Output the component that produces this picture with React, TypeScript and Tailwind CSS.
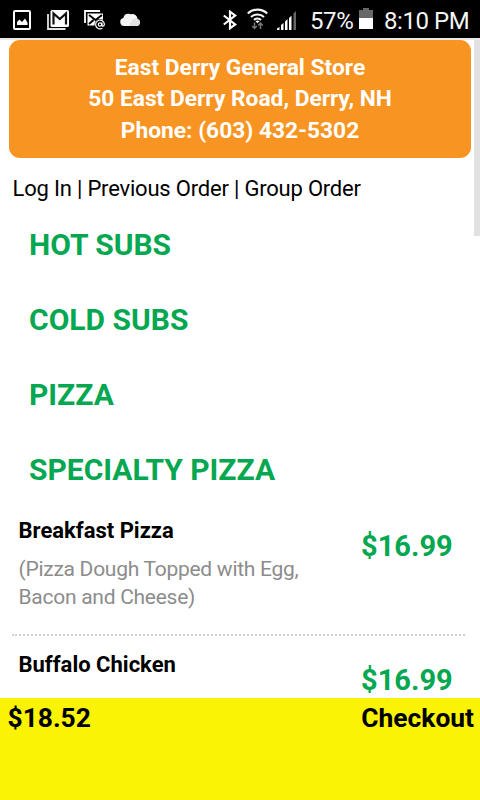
import React from "react";

const categories = ["HOT SUBS", "COLD SUBS", "PIZZA", "SPECIALTY PIZZA"];

const items = [
  {
    name: "Breakfast Pizza",
    description: "(Pizza Dough Topped with Egg, Bacon and Cheese)",
    price: "$16.99"
  },
  {
    name: "Buffalo Chicken",
    description: "",
    price: "$16.99"
  }
];

const PictureIcon = () => (
  <svg width="18" height="20" viewBox="0 0 18 20">
    <rect x="1" y="1" width="16" height="18" rx="1" fill="none" stroke="#fff" strokeWidth="2" />
    <path d="M4 15v-3l2.500-2.500L9 12l3-3.500 2.500 4V15z" fill="#fff" />
  </svg>
);

const GmailIcon = () => (
  <svg width="22" height="20" viewBox="0 0 22 20">
    <path d="M1 4v15h17.500" fill="none" stroke="#e4e4e4" strokeWidth="1.800" />
    <rect x="3.500" y="0" width="18.500" height="17" rx="1.500" fill="#fff" />
    <path d="M6.500 14.500V3.500L12.800 9l6.200-5.500v11" fill="none" stroke="#111" strokeWidth="2.200" />
  </svg>
);

const MailIcon = () => (
  <svg width="22" height="20" viewBox="0 0 22 20">
    <path d="M1 13V1h15" fill="none" stroke="#fff" strokeWidth="1.800" />
    <rect x="3.500" y="3.500" width="15.500" height="12" fill="#fff" />
    <path d="M5 5l6.500 5L18 5M5 14l4.500-4M13.500 10l3 3" fill="none" stroke="#000" strokeWidth="2" />
    <circle cx="16.200" cy="14.500" r="5.600" fill="#000" />
    <circle cx="16" cy="14.500" r="1.700" fill="none" stroke="#fff" strokeWidth="1.200" />
    <path d="M18 12.500v2.700c0 1.700 2.400 1.200 2.400-.9a4.400 4.400 0 1 0-2 3.900" fill="none" stroke="#fff" strokeWidth="1.200" />
  </svg>
);

const CloudIcon = () => (
  <svg width="21" height="14" viewBox="0 0 21 14">
    <path d="M4 13a4 4 0 0 1-.6-7.900A5 5 0 0 1 8.500.8a5.500 5.500 0 0 1 2.500.4 5 5 0 0 1 6.500 4.600A3.700 3.700 0 0 1 16.800 13z" fill="#f5f5f5" />
    <path d="M10 13a4 4 0 0 1 1.500-4.500 4 4 0 0 1 6-2.500A3.700 3.700 0 0 1 16.800 13z" fill="#e0e0e0" />
  </svg>
);

const BluetoothIcon = () => (
  <svg width="14" height="20" viewBox="0 0 14 20">
    <path d="M.8 5.500l11.400 9-5.200 3.800V1.700l5.200 3.800-11.400 9" fill="none" stroke="#fff" strokeWidth="2.200" />
  </svg>
);

const WifiIcon = () => (
  <svg width="22" height="22" viewBox="0 0 22 22">
    <g fill="none" stroke="#f5f5f5" strokeWidth="2.100">
      <path d="M.8 5.500a14 14 0 0 1 19.400 0" />
      <path d="M4 9a9.500 9.500 0 0 1 13 0" />
      <path d="M7 12a5.200 5.200 0 0 1 7 0" />
    </g>
    <path d="M8.500 13.300a3 3 0 0 1 4 0l-2 2z" fill="#fff" />
    <path d="M7.500 14.500v6M5.200 18l2.300 2.500L9.800 18M13.500 21v-6M11.200 17.500l2.300-2.500 2.300 2.500" fill="none" stroke="#777" strokeWidth="1.500" />
  </svg>
);

const SignalIcon = () => (
  <svg width="20" height="20" viewBox="0 0 20 20">
    <path d="M0 20v-1.500L2.500 17v3zM4 20v-5l2.500-2v7zM8 20v-8.500L10.500 9v11zM12 20V8l2.500-2.300V20z" fill="#fff" />
    <path d="M16.500 20V3.500L19 1v19z" fill="#666" />
  </svg>
);

const BatteryIcon = () => (
  <svg width="14" height="21" viewBox="0 0 14 21">
    <path d="M4 0h6v2h4v8H0V2h4z" fill="#686868" />
    <path d="M0 10h14v11H0z" fill="#fff" />
  </svg>
);

const StatusBar = () => (
  <div className="flex h-[38px] shrink-0 items-start bg-black text-[#f5f5f5]">
    <div className="ml-[13px] mt-[10px]"><PictureIcon /></div>
    <div className="ml-[16px] mt-[10px]"><GmailIcon /></div>
    <div className="ml-[15px] mt-[10px]"><MailIcon /></div>
    <div className="ml-[14px] mt-[13px]"><CloudIcon /></div>
    <div className="ml-[82px] mt-[10px]"><BluetoothIcon /></div>
    <div className="ml-[10px] mt-[8px]"><WifiIcon /></div>
    <div className="ml-[8px] mt-[10px]"><SignalIcon /></div>
    <span className="ml-[13px] mt-[6px] w-[44px] whitespace-nowrap text-[24px] leading-[30px] tracking-[-0.4px]">57%</span>
    <div className="ml-[5px] mt-[8px]"><BatteryIcon /></div>
    <span className="ml-[11px] mt-[6px] whitespace-nowrap text-[24px] leading-[30px] tracking-[-0.45px]">8:10 PM</span>
  </div>
);

const StoreHeader = () => (
  <div className="mx-[9px] h-[118px] rounded-[11px] bg-[#f89422] pt-[12px] text-center text-[22.75px] font-bold leading-[31.4px] text-white">
    <p>East Derry General Store</p>
    <p>50 East Derry Road, Derry, NH</p>
    <p>Phone: (603) 432-5302</p>
  </div>
);

const App = () => {
  return (
    <div className="flex h-[800px] w-[480px] flex-col overflow-hidden bg-white font-[Roboto,sans-serif]">
      <StatusBar />
      <div className="relative flex-1 overflow-hidden border-t-2 border-[#ece8ec]">
        {/* scrollbar */}
        <div className="absolute right-0 top-0 h-[196px] w-[6px] bg-[#e1e1e1]" />
        <StoreHeader />
        <nav className="ml-[12.6px] mt-[16px] whitespace-nowrap text-[22px] leading-[30px] tracking-[-0.2px] text-black">
          <a>Log In</a> | <a>Previous Order</a> | <a>Group Order</a>
        </nav>
        <div className="mt-[3px] pl-[29px]">
          {categories.map((category) => (
            <h2 key={category} className="h-[75px] text-[30px] font-bold leading-[75px] text-[#05a751]">
              {category}
            </h2>
          ))}
        </div>
        <div className="mt-[9px] flex flex-col gap-[14px]">
          {items.map((item) => (
            <div
              key={item.name}
              className="ml-[12px] mr-[15px] flex h-[120px] items-start justify-between border-b-2 border-dotted border-[#d0d0d0] pl-[6.5px] pr-[12.3px]"
            >
              <div className="w-[300px]">
                <h3 className="text-[22px] font-bold leading-[30px] text-black">{item.name}</h3>
                <p className="mt-[9px] text-[21px] leading-[28px] tracking-[-0.27px] text-[#8c8c8c]">{item.description}</p>
              </div>
              <span className="mt-[12px] text-[29px] font-bold leading-[36px] text-[#05a751]">{item.price}</span>
            </div>
          ))}
        </div>
      </div>
      <div className="flex h-[102px] shrink-0 items-start justify-between bg-[#faf305] pl-[7.5px] pr-[6px] pt-[3px] text-[26.4px] font-bold leading-[34px] text-black">
        <span>$18.52</span>
        <span>Checkout</span>
      </div>
    </div>
  );
};

export default App;
